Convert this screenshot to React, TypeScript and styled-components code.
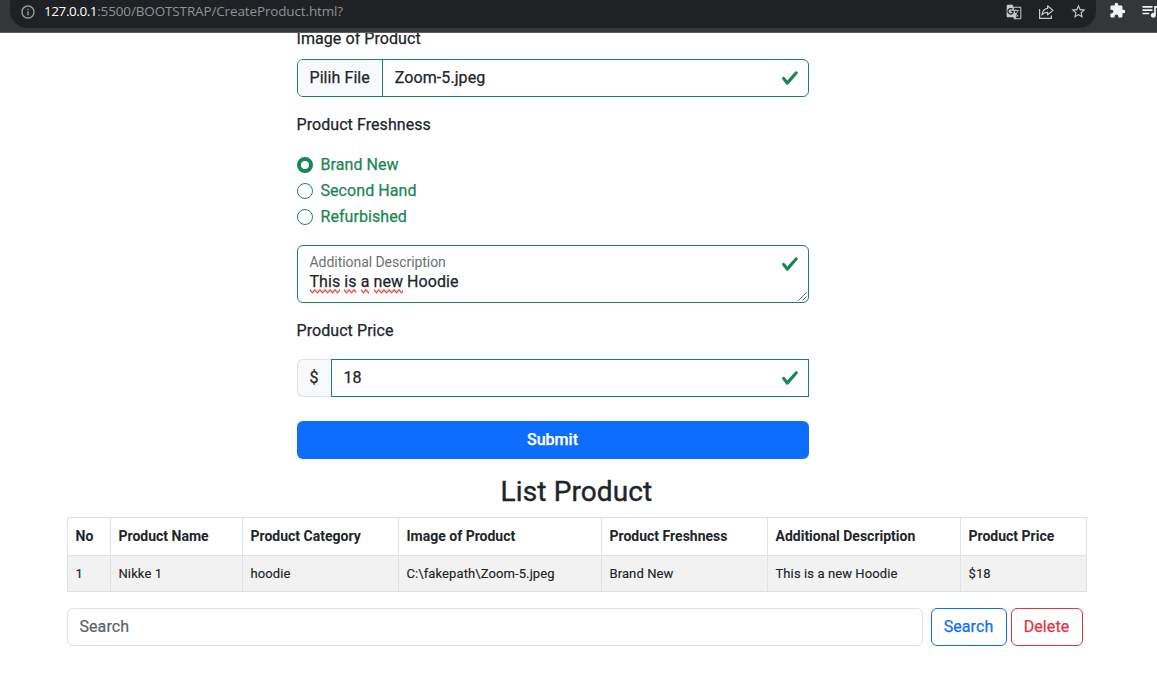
import React from "react";
import styled, { createGlobalStyle, css } from "styled-components";
import {
  MdExtension,
  MdGTranslate,
  MdInfoOutline,
  MdQueueMusic,
  MdStarBorder,
} from "react-icons/md";

const GREEN = "#198754";
const BORDER = "#dee2e6";
const INK = "#212529";

const GlobalStyle = createGlobalStyle`
  *, *::before, *::after { box-sizing: border-box; }
  html, body { margin: 0; background: #fff; overflow: hidden; }
  body {
    font-family: Roboto, "Liberation Sans", sans-serif;
    font-size: 16px;
    font-weight: 400;
    letter-spacing: 0.07px;
    -webkit-text-stroke: 0.25px currentColor;
    line-height: 24px;
    color: ${INK};
  }
`;

const Window = styled.div`
  display: flex;
  flex-direction: column;
  width: 1157px;
  height: 675px;
  overflow: hidden;
`;

const BrowserBar = styled.header`
  flex: none;
  display: flex;
  align-items: flex-start;
  height: 33px;
  padding-left: 10px;
  overflow: hidden;
  background: #35363a;
  border-bottom: 1px solid #5b5c60;
  -webkit-text-stroke: 0;
`;

const AddressBar = styled.div`
  flex: none;
  display: flex;
  align-items: center;
  width: 1086px;
  height: 28px;
  padding: 0 9.5px 5px 10px;
  border-radius: 0 0 17px 17px;
  background: #202124;
  color: #9aa0a6;
`;

const Url = styled.span`
  margin: -2px 0 0 8px;
  flex: 1;
  font: 400 13.5px/22px "Open Sans", "Noto Sans", sans-serif;
  letter-spacing: -0.14px;
  color: #8f9398;
  white-space: nowrap;
`;

const Host = styled.span`
  color: #fff;
  letter-spacing: -0.42px;
`;

const AddressActions = styled.div`
  display: flex;
  align-items: center;
  gap: 16px;
  color: #c6c8ca;
  svg { display: block; }
`;

const Extensions = styled.div`
  flex: none;
  display: flex;
  gap: 14px;
  margin: 1px 0 0 13px;
  color: #f1f3f4;
  svg { display: block; flex: none; }
  svg:first-child { margin-top: 1px; }
`;

const Page = styled.main`
  flex: 1;
  min-height: 0;
  overflow: hidden;
  padding-left: 66.5px;
`;

const Form = styled.form`
  display: flex;
  flex-direction: column;
  width: 512px;
  margin: -6px 0 16px 230px;
`;

const Label = styled.div<{ $gap?: number }>`
  height: 24px;
  margin-bottom: ${(p) => p.$gap ?? 16}px;
`;

const control = css`
  display: flex;
  align-items: center;
  height: 38px;
  background: #fff;
  border: 1px solid ${GREEN};
`;

const FileControl = styled.div`
  ${control}
  padding-right: 9px;
  margin-bottom: 16px;
  border-radius: 6px;
  overflow: hidden;
`;

const FileButton = styled.span`
  display: flex;
  align-items: center;
  height: 100%;
  padding: 0 12px 1px;
  background: #f8f9fa;
  border-right: 1px solid ${GREEN};
`;

const Value = styled.span`
  flex: 1;
  padding: 0 12px 1px;
`;

const RadioGroup = styled.div`
  display: flex;
  flex-direction: column;
  gap: 2px;
  margin-bottom: 16px;
`;

const RadioRow = styled.label`
  display: flex;
  align-items: center;
  gap: 8px;
  height: 24px;
  color: ${GREEN};
`;

const RadioDot = styled.span<{ $checked?: boolean }>`
  width: 16px;
  height: 16px;
  border-radius: 50%;
  border: ${(p) => (p.$checked ? 4 : 1)}px solid ${GREEN};
  background: #fff;
`;

const Description = styled.div`
  position: relative;
  display: flex;
  justify-content: space-between;
  height: 58px;
  margin-bottom: 16px;
  padding: 9px 9px 0 12px;
  border: 1px solid ${GREEN};
  border-radius: 6px;
`;

const FloatingLabel = styled.div`
  height: 15px;
  font-size: 14px;
  letter-spacing: -0.05px;
  line-height: 14px;
  white-space: nowrap;
  color: #6c7074;
  -webkit-text-stroke: 0;
`;

const DescriptionText = styled.div`
  line-height: 24px;
`;

const Misspelled = styled.span`
  position: relative;
`;

const Squiggle = styled.svg`
  position: absolute;
  left: 0;
  bottom: -3px;
  width: 100%;
  height: 5px;
`;

const Grip = styled.svg`
  position: absolute;
  right: 1px;
  bottom: 1px;
`;

const PriceGroup = styled.div`
  display: flex;
  margin-bottom: 24px;
`;

const Currency = styled.span`
  width: 34px;
  height: 38px;
  padding: 6px 0 0 12px;
  background: #f8f9fa;
  border: 1px solid ${BORDER};
  border-right: 0;
  border-radius: 6px 0 0 6px;
`;

const PriceInput = styled.div`
  ${control}
  flex: 1;
  padding-right: 9px;
`;

const Submit = styled.button`
  height: 38px;
  padding: 0 0 1px;
  border: 0;
  border-radius: 6px;
  background: #0d6efd;
  color: #fff;
  font: inherit;
  font-weight: 500;
`;

const Title = styled.h3`
  width: 1020px;
  height: 34px;
  margin: 0 0 8px;
  font-size: 28px;
  line-height: 33.6px;
  font-weight: 400;
  letter-spacing: 0.12px;
  -webkit-text-stroke-width: 0.4px;
  text-align: center;
`;

const Table = styled.table`
  width: 1019px;
  table-layout: fixed;
  border-collapse: collapse;
  margin-bottom: 16px;
`;

const cell = css`
  padding: 0 8px;
  border: 1px solid ${BORDER};
  text-align: left;
  white-space: nowrap;
`;

const HeadCell = styled.th`
  ${cell}
  height: 38px;
  padding-bottom: 1px;
  font-size: 14px;
  font-weight: 700;
  letter-spacing: 0;
  -webkit-text-stroke: 0;
`;

const Cell = styled.td`
  ${cell}
  height: 36px;
  font-size: 13px;
  letter-spacing: 0.1px;
  -webkit-text-stroke-width: 0.15px;
  background: #f2f2f2;
`;

const SearchBar = styled.div`
  display: flex;
`;

const SearchInput = styled.input`
  flex: none;
  width: 856px;
  height: 38px;
  margin-right: 8px;
  padding: 0 12px 1px;
  border: 1px solid ${BORDER};
  border-radius: 6px;
  font: inherit;
  letter-spacing: inherit;
  &::placeholder {
    color: #5b6168;
    opacity: 1;
    -webkit-text-stroke: 0.2px #5b6168;
  }
`;

const OutlineButton = styled.button<{ $color: string; $width: number }>`
  width: ${(p) => p.$width}px;
  height: 38px;
  margin-right: 4px;
  padding: 0 0 1px;
  flex: none;
  border: 1px solid ${(p) => p.$color};
  border-radius: 6px;
  background: #fff;
  color: ${(p) => p.$color};
  font: inherit;
  letter-spacing: inherit;
`;

const Check = () => (
  <svg width="18" height="18" viewBox="0 0 8 8" fill={GREEN}>
    <path d="M2.3 6.73.6 4.53c-.4-1.04.46-1.4 1.1-.8l1.1 1.4 3.4-3.8c.6-.63 1.6-.27 1.2.7l-4 4.6c-.43.5-.8.4-1.1.1z" />
  </svg>
);

const ShareIcon = () => (
  <svg width="16" height="16" viewBox="0 0 16 16" fill="none" stroke="currentColor" strokeWidth="1.2">
    <path d="M1.6 5v9.4h11.8v-3" />
    <path d="M9.6 1.8 15 6.4l-5.4 4.4V8.3C7 8.3 5.2 9.2 3.9 11 4.4 7.4 6.2 4.8 9.6 4.4z" strokeLinejoin="round" />
  </svg>
);

const Wrong = ({ id, children }: { id: string; children: string }) => (
  <Misspelled>
    {children}
    <Squiggle>
      <defs>
        <pattern id={id} width="5" height="5" patternUnits="userSpaceOnUse">
          <path d="M-1.5 2.5 0 .8l2.5 3 2.5-3 1.5 1.7" fill="none" stroke="#f33" strokeWidth="1.2" />
        </pattern>
      </defs>
      <rect width="100%" height="5" fill={`url(#${id})`} />
    </Squiggle>
  </Misspelled>
);

const conditions = ["Brand New", "Second Hand", "Refurbished"];

const columns: [string, number, string][] = [
  ["No", 43, "1"],
  ["Product Name", 132, "Nikke 1"],
  ["Product Category", 156, "hoodie"],
  ["Image of Product", 203, "C:\\fakepath\\Zoom-5.jpeg"],
  ["Product Freshness", 166, "Brand New"],
  ["Additional Description", 193, "This is a new Hoodie"],
  ["Product Price", 126, "$18"],
];

export default function App() {
  return (
    <Window>
      <GlobalStyle />
      <BrowserBar>
        <AddressBar>
          <MdInfoOutline size={16} />
          <Url>
            <Host>127.0.0.1</Host>:5500/BOOTSTRAP/CreateProduct.html?
          </Url>
          <AddressActions>
            <MdGTranslate size={16} />
            <ShareIcon />
            <MdStarBorder size={17} />
          </AddressActions>
        </AddressBar>
        <Extensions>
          <MdExtension size={17} />
          <MdQueueMusic size={20} />
        </Extensions>
      </BrowserBar>
      <Page>
        <Form>
          <Label $gap={8}>Image of Product</Label>
          <FileControl>
            <FileButton>Pilih File</FileButton>
            <Value>Zoom-5.jpeg</Value>
            <Check />
          </FileControl>
          <Label>Product Freshness</Label>
          <RadioGroup>
            {conditions.map((name, i) => (
              <RadioRow key={name}>
                <RadioDot $checked={i === 0} />
                {name}
              </RadioRow>
            ))}
          </RadioGroup>
          <Description>
            <div>
              <FloatingLabel>Additional Description</FloatingLabel>
              <DescriptionText>
                <Wrong id="w1">This</Wrong> <Wrong id="w2">is</Wrong> <Wrong id="w3">a</Wrong>{" "}
                <Wrong id="w4">new</Wrong> Hoodie
              </DescriptionText>
            </div>
            <Check />
            <Grip width="9" height="9" viewBox="0 0 9 9" stroke="#555" strokeWidth="0.9">
              <path d="M.5 8.5l8-8M4.5 8.5l4-4" />
            </Grip>
          </Description>
          <Label>Product Price</Label>
          <PriceGroup>
            <Currency>$</Currency>
            <PriceInput>
              <Value>18</Value>
              <Check />
            </PriceInput>
          </PriceGroup>
          <Submit type="button">Submit</Submit>
        </Form>
        <Title>List Product</Title>
        <Table>
          <colgroup>
            {columns.map(([name, width]) => (
              <col key={name} width={width} />
            ))}
          </colgroup>
          <thead>
            <tr>
              {columns.map(([name]) => (
                <HeadCell key={name}>{name}</HeadCell>
              ))}
            </tr>
          </thead>
          <tbody>
            <tr>
              {columns.map(([name, , value]) => (
                <Cell key={name}>{value}</Cell>
              ))}
            </tr>
          </tbody>
        </Table>
        <SearchBar>
          <SearchInput placeholder="Search" />
          <OutlineButton type="button" $color="#0d6efd" $width={76}>
            Search
          </OutlineButton>
          <OutlineButton type="button" $color="#dc3545" $width={72}>
            Delete
          </OutlineButton>
        </SearchBar>
      </Page>
    </Window>
  );
}
